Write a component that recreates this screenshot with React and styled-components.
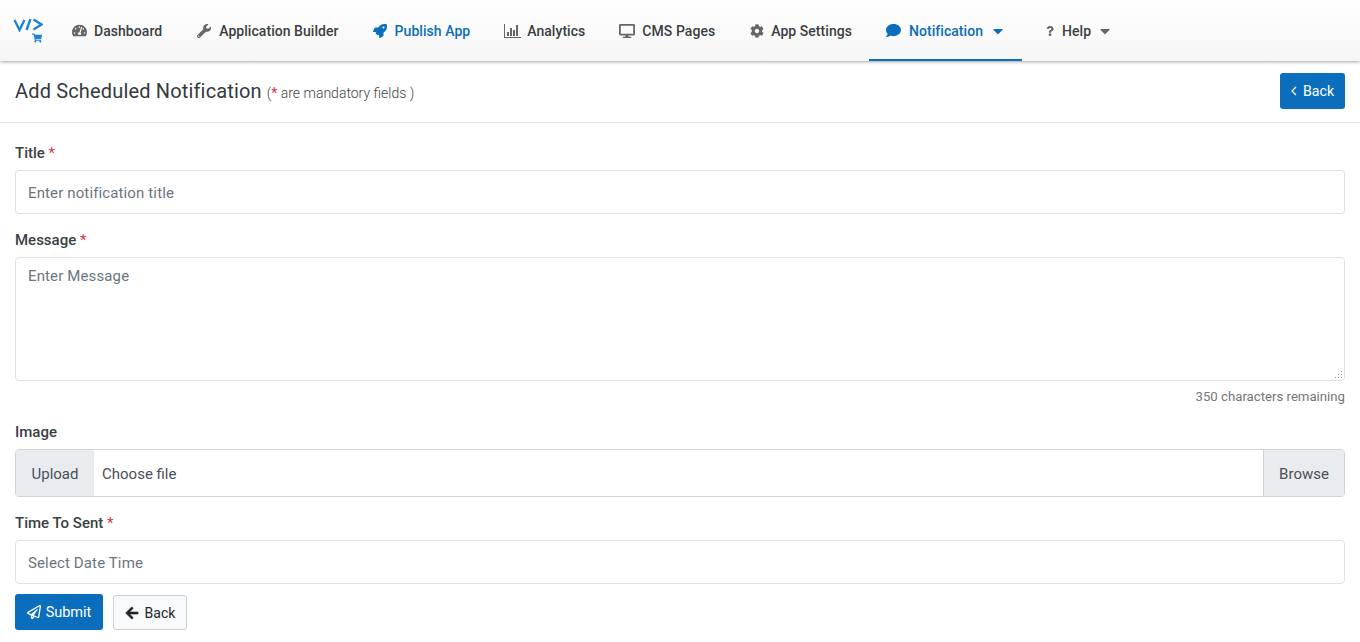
import React from "react";
import styled, { createGlobalStyle } from "styled-components";
import {
  FaTachometerAlt,
  FaWrench,
  FaRocket,
  FaDesktop,
  FaCog,
  FaComment,
  FaQuestion,
  FaCaretDown,
  FaRegPaperPlane,
  FaArrowLeft,
  FaShoppingCart,
} from "react-icons/fa";

const Global = createGlobalStyle`
  html, body { margin: 0; padding: 0; background: #fff; overflow: hidden; }
  body { font-family: Roboto, "Liberation Sans", sans-serif; color: #212529; }
  * { box-sizing: border-box; }
`;

const NavBar = styled.nav`
  display: flex;
  align-items: stretch;
  height: 61px;
  padding-left: 13px;
  background: linear-gradient(#ffffff, #f6f6f6);
  box-shadow: 0 1px 3px rgba(0, 0, 0, 0.35);
  position: relative;
`;

const Logo = styled.div`
  width: 42px;
  padding-top: 18px;
  color: #1a82d8;
  display: flex;
  flex-direction: column;
  align-items: flex-start;
  svg.cart { margin: 1px 0 0 19px; font-size: 10px; }
`;

const NavItem = styled.a`
  display: flex;
  align-items: center;
  gap: ${({ $gap }) => $gap || 8}px;
  padding: 2px ${({ $right }) => $right || 17}px 0 ${({ $left }) => $left || 17}px;
  font-size: 14px;
  letter-spacing: 0.05px;
  font-weight: 500;
  color: ${({ $blue }) => ($blue ? "#0a6ebd" : "#3a3f44")};
  border-bottom: 2px solid ${({ $active }) => ($active ? "#0a6ebd" : "transparent")};
  white-space: nowrap;
  svg { color: ${({ $blue }) => ($blue ? "#0a6ebd" : "#666")}; flex: none; }
`;

const Caret = styled(FaCaretDown)`
  font-size: 16px;
  margin-left: ${({ $m }) => $m}px;
`;

const HeaderRow = styled.header`
  display: flex;
  align-items: center;
  justify-content: space-between;
  height: 62px;
  padding: 0 15px 2px;
  border-bottom: 1px solid #e2e4e6;
`;

const Heading = styled.h1`
  margin: 0;
  font-size: 20px;
  letter-spacing: 0.16px;
  font-weight: 400;
  color: #343a40;
  small {
    font-size: 14px;
    font-weight: 300;
    letter-spacing: 0;
    color: #444;
    margin-left: 5px;
  }
  b { color: #dc3545; font-weight: 400; }
`;

const PrimaryButton = styled.button`
  display: inline-flex;
  align-items: center;
  justify-content: center;
  gap: ${({ $gap }) => $gap || 5}px;
  height: 36px;
  width: ${({ $w }) => $w}px;
  padding: ${({ $top }) => $top || 0}px 0 0;
  border: 0;
  border-radius: 3px;
  background: #0a6ebd;
  color: #fff;
  font: 400 ${({ $size }) => $size || 14.5}px Roboto, sans-serif;
`;

const LightButton = styled.button`
  display: inline-flex;
  align-items: center;
  justify-content: center;
  gap: 6px;
  height: 35px;
  width: 74px;
  margin-top: 1px;
  padding: 0;
  border: 1px solid #ccd0d4;
  border-radius: 3px;
  background: #f8f9fa;
  color: #212529;
  font: 400 14px Roboto, sans-serif;
  svg { stroke: currentColor; stroke-width: 20px; }
`;

const Form = styled.form`
  padding: 21px 15px 0;
`;

const Label = styled.label`
  display: block;
  height: 18px;
  line-height: 18px;
  margin-bottom: 8px;
  font-size: 15px;
  font-weight: 500;
  color: #3a3f44;
  b { color: #dc3545; font-weight: 400; }
`;

const Input = styled.input`
  display: block;
  width: 100%;
  height: 44px;
  padding: 2px 12px 0;
  margin-bottom: 17px;
  border: 1px solid #dfe3e7;
  border-radius: 4px;
  background: #fff;
  font: 400 15px Roboto, sans-serif;
  letter-spacing: 0.13px;
  outline: none;
  &::placeholder { color: #6c757d; opacity: 1; }
`;

const TextWrap = styled.div`
  position: relative;
  height: 124px;
`;

const TextArea = styled.textarea`
  display: block;
  width: 100%;
  height: 124px;
  padding: 8px 12px;
  border: 1px solid #dfe3e7;
  border-radius: 4px;
  resize: none;
  font: 400 15px Roboto, sans-serif;
  letter-spacing: 0.13px;
  line-height: 20px;
  outline: none;
  &::placeholder { color: #6c757d; opacity: 1; }
`;

const Grip = styled.svg`
  position: absolute;
  right: 2px;
  bottom: 2px;
  fill: #9a9a9a;
`;

const Remaining = styled.div`
  height: 16px;
  margin: 8px 0 18px;
  text-align: right;
  font-size: 13.2px;
  line-height: 16px;
  color: #757575;
`;

const FileGroup = styled.div`
  display: flex;
  align-items: stretch;
  height: 48px;
  margin-bottom: 17px;
  padding: 0;
  border: 1px solid #ced4da;
  border-radius: 4px;
  overflow: hidden;
  font-size: 15px;
  color: #495057;
`;

const Addon = styled.span`
  display: flex;
  align-items: center;
  justify-content: center;
  width: ${({ $w }) => $w}px;
  padding-top: 1px;
  background: #e9ecef;
  border-left: ${({ $end }) => ($end ? "1px solid #ced4da" : "0")};
`;

const FileName = styled.span`
  flex: 1;
  display: flex;
  align-items: center;
  padding: 1px 0 0 8px;
`;

const Actions = styled.div`
  display: flex;
  align-items: flex-start;
  gap: 10px;
  margin-top: -7px;
`;

const AnalyticsIcon = () => (
  <svg width="17" height="14" viewBox="0 0 17 14" fill="currentColor">
    <path d="M0 0h1v13h16v1H0z" />
    <path d="M3 8h2v4H3zM6 4h2v8H6zM9 6h2v6H9zM12 1h2v11h-2z" />
  </svg>
);

const LogoMark = () => (
  <svg width="30" height="14" viewBox="0 0 30 14" fill="none" stroke="currentColor" strokeWidth="2.3">
    <path d="M1.5 2l5 10 5-10" />
    <path d="M13.5 12l4-11" />
    <path d="M20.5 1.5l8 5-8 5" />
  </svg>
);

const BackChevron = () => (
  <svg width="6" height="10" viewBox="0 0 6 10" fill="none" stroke="currentColor" strokeWidth="1.2">
    <path d="M5 1L1 5l4 4" />
  </svg>
);

export default function App() {
  return (
    <>
      <Global />
      <NavBar>
        <Logo>
          <LogoMark />
          <FaShoppingCart className="cart" />
        </Logo>
        <NavItem $gap={7}><FaTachometerAlt size={15} />Dashboard</NavItem>
        <NavItem $left={18}><FaWrench size={14} />Application Builder</NavItem>
        <NavItem $blue><FaRocket size={14} />Publish App</NavItem>
        <NavItem $gap={6}><AnalyticsIcon />Analytics</NavItem>
        <NavItem $gap={7}><FaDesktop size={16} />CMS Pages</NavItem>
        <NavItem $gap={7} $left={18}><FaCog size={14} />App Settings</NavItem>
        <NavItem $blue $active $right={16}><FaComment size={15} />Notification<Caret $m={-1} /></NavItem>
        <NavItem $gap={7} $left={23}><FaQuestion size={10} />Help<Caret $m={-1} /></NavItem>
      </NavBar>

      <HeaderRow>
        <Heading>
          Add Scheduled Notification<small>(<b>*</b> are mandatory fields )</small>
        </Heading>
        <PrimaryButton type="button" $w={65} $gap={6} $top={1} $size={14.2}><BackChevron />Back</PrimaryButton>
      </HeaderRow>

      <Form>
        <Label>Title <b>*</b></Label>
        <Input placeholder="Enter notification title" />
        <Label>Message <b>*</b></Label>
        <TextWrap>
          <TextArea placeholder="Enter Message" />
          <Grip width="9" height="9" viewBox="0 0 9 9">
            <path d="M7 1h1v1H7zM4 4h1v1H4zM7 4h1v1H7zM1 7h1v1H1zM4 7h1v1H4zM7 7h1v1H7z" />
          </Grip>
        </TextWrap>
        <Remaining>350 characters remaining</Remaining>
        <Label>Image</Label>
        <FileGroup>
          <Addon $w={78}>Upload</Addon>
          <FileName>Choose file</FileName>
          <Addon $w={81} $end>Browse</Addon>
        </FileGroup>
        <Label>Time To Sent <b>*</b></Label>
        <Input placeholder="Select Date Time" />
        <Actions>
          <PrimaryButton type="button" $w={88}><FaRegPaperPlane size={14} />Submit</PrimaryButton>
          <LightButton type="button"><FaArrowLeft size={14} />Back</LightButton>
        </Actions>
      </Form>
    </>
  );
}
